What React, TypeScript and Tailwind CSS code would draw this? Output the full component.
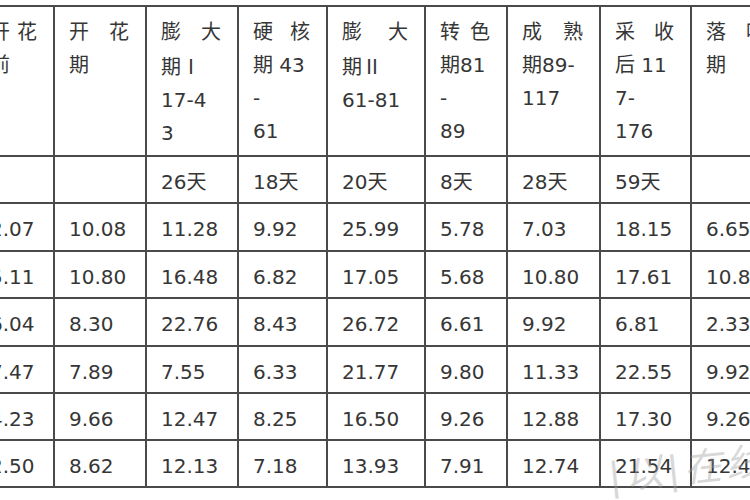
type HeadLine = { text: string; spread?: boolean };

const headers: HeadLine[][] = [
  [{ text: "开花", spread: true }, { text: "前" }],
  [{ text: "开花", spread: true }, { text: "期" }],
  [{ text: "膨大", spread: true }, { text: "期Ⅰ" }, { text: "17-4" }, { text: "3" }],
  [{ text: "硬核", spread: true }, { text: "期 43" }, { text: "-" }, { text: "61" }],
  [{ text: "膨大", spread: true }, { text: "期Ⅱ" }, { text: "61-81" }],
  [{ text: "转色", spread: true }, { text: "期81" }, { text: "-" }, { text: "89" }],
  [{ text: "成熟", spread: true }, { text: "期89-" }, { text: "117" }],
  [{ text: "采收", spread: true }, { text: "后 11" }, { text: "7-" }, { text: "176" }],
  [{ text: "落叶", spread: true }, { text: "期" }],
];

const days = ["", "", "26天", "18天", "20天", "8天", "28天", "59天", ""];

const rows = [
  ["2.07", "10.08", "11.28", "9.92", "25.99", "5.78", "7.03", "18.15", "6.65"],
  ["5.11", "10.80", "16.48", "6.82", "17.05", "5.68", "10.80", "17.61", "10.84"],
  ["6.04", "8.30", "22.76", "8.43", "26.72", "6.61", "9.92", "6.81", "2.33"],
  ["7.47", "7.89", "7.55", "6.33", "21.77", "9.80", "11.33", "22.55", "9.92"],
  ["4.23", "9.66", "12.47", "8.25", "16.50", "9.26", "12.88", "17.30", "9.26"],
  ["2.50", "8.62", "12.13", "7.18", "13.93", "7.91", "12.74", "21.54", "12.44"],
];

const cjk = { fontFamily: '"Noto Sans CJK SC", sans-serif' };

function Cell({ children }: { children?: React.ReactNode }) {
  return (
    <div className="bg-white pl-[14px] pr-[16px] pt-[9px] leading-[33px]">
      {children}
    </div>
  );
}

// roman numerals come from the CJK font so they get the serif form
function HeadText({ text }: { text: string }) {
  return (
    <>
      {text.split(/([ⅠⅡ])/).map((part, k) =>
        part === "Ⅰ" || part === "Ⅱ" ? (
          <span key={k} style={cjk}>
            {part}
          </span>
        ) : (
          <span key={k}>{part}</span>
        )
      )}
    </>
  );
}

export default function App() {
  return (
    <div
      className="relative h-[500px] w-[750px] overflow-hidden bg-white pt-[5px] text-[20px] text-[#363636]"
      style={{ fontFamily: '"DejaVu Sans", "Noto Sans CJK SC", sans-serif' }}
    >
      <div className="ml-[-26px] grid w-max grid-cols-[77px_90px_90px_87px_96px_80px_91px_89px_90px] grid-rows-[148px_45px_46px_45px_46px_45px_45px_45px] gap-[2px] bg-[#4a4a4a] p-[2px]">
        {headers.map((lines, i) => (
          <Cell key={`h${i}`}>
            {lines.map((line, j) =>
              line.spread ? (
                <div key={j} className="flex justify-between">
                  {line.text.split("").map((ch, k) => (
                    <span key={k}>{ch}</span>
                  ))}
                </div>
              ) : (
                <div key={j} className="whitespace-pre">
                  <HeadText text={line.text} />
                </div>
              )
            )}
          </Cell>
        ))}
        {days.map((d, i) => (
          <Cell key={`d${i}`}>{d}</Cell>
        ))}
        {rows.map((row, r) =>
          row.map((v, c) => <Cell key={`r${r}c${c}`}>{v}</Cell>)
        )}
      </div>

      {/* faint site watermark over the corner */}
      <div className="pointer-events-none absolute left-[608px] top-[450px] -rotate-6 whitespace-nowrap text-[38px] italic leading-none tracking-[4px] text-[#a0a0a0] opacity-40">
        |以|在线
      </div>
    </div>
  );
}
